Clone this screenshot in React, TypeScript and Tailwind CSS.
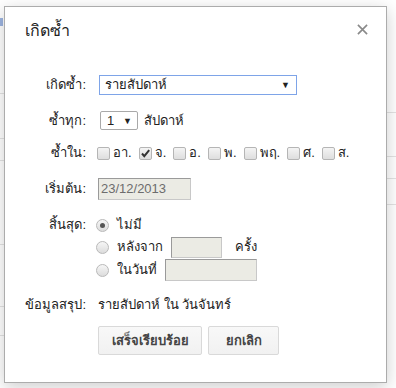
import React from 'react';

const days = [
  { label: 'อา.', checked: false },
  { label: 'จ.', checked: true },
  { label: 'อ.', checked: false },
  { label: 'พ.', checked: false },
  { label: 'พฤ.', checked: false },
  { label: 'ศ.', checked: false },
  { label: 'ส.', checked: false },
];

const Checkbox = ({ checked }: { checked: boolean }) => (
  <span className="relative inline-block w-[13px] h-[13px] rounded-[2px] border border-[#b5b5b5] bg-gradient-to-b from-[#f4f4f4] to-[#dedede]">
    {checked && (
      <svg viewBox="0 0 13 13" className="absolute -left-px -top-px w-[13px] h-[13px]">
        <path d="M3 6.5 L5.3 9.2 L10.2 3.2" fill="none" stroke="#333" strokeWidth="2" />
      </svg>
    )}
  </span>
);

const Radio = ({ checked }: { checked: boolean }) => (
  <span className="flex shrink-0 items-center justify-center w-[13px] h-[13px] rounded-full border border-[#b9b9b9] bg-gradient-to-b from-[#f6f6f6] to-[#dcdcdc]">
    {checked && <span className="w-[5px] h-[5px] rounded-full bg-[#555]" />}
  </span>
);

const Label = ({ children }: { children: React.ReactNode }) => (
  <div className="w-[83px] shrink-0 pr-[2px] text-right">{children}</div>
);

const App = () => {
  return (
    <div
      className="relative w-[396px] h-[388px] overflow-hidden bg-white text-[13px] leading-[18px] text-[#222]"
      style={{ fontFamily: '"Liberation Sans", "Noto Sans", "DejaVu Sans", sans-serif' }}
    >
      {/* calendar grid peeking out behind the dialog */}
      <div className="absolute left-0 top-[18px] w-[3px] h-[8px] bg-[#9db4e0]" />
      {[93, 138, 160, 244, 306, 335].map((y) => (
        <div key={'l' + y} className="absolute left-0 w-[4px] h-px bg-[#e3e3e3]" style={{ top: y }} />
      ))}
      {[112, 156, 178, 204].map((y) => (
        <div key={'r' + y} className="absolute right-0 w-[10px] h-px bg-[#e3e3e3]" style={{ top: y }} />
      ))}

      {/* dialog */}
      <div className="absolute left-[4px] top-[6px] w-[383px] h-[377px] border border-[#acacac] bg-white shadow-[0_4px_16px_rgba(0,0,0,0.2)]">
        <div className="flex items-start justify-between pl-[20px] pr-[18px] pt-[14px] h-[50px]">
          <span className="text-[16px] leading-[20px] text-[#222]">เกิดซ้ำ</span>
          <svg viewBox="0 0 12 12" className="mt-[3px] w-[11px] h-[11px]">
            <path d="M1 1 L11 11 M11 1 L1 11" stroke="#8a8a8a" strokeWidth="1.8" />
          </svg>
        </div>

        <div className="flex flex-col">
          {/* repeats */}
          <div className="mt-[18px] flex items-center gap-[10px] h-[20px]">
            <Label>เกิดซ้ำ:</Label>
            <div className="flex items-center justify-between ml-px w-[198px] h-[20px] border border-[#7ea4e8] pl-[5px] pr-[6px]">
              <span>รายสัปดาห์</span>
              <span className="text-[9px]">▼</span>
            </div>
          </div>

          {/* repeat every */}
          <div className="mt-[16px] flex items-center gap-[10px] h-[19px]">
            <Label>ซ้ำทุก:</Label>
            <div className="flex items-center justify-between ml-[2px] w-[38px] h-[19px] border border-[#a9a9a9] rounded-[2px] pl-[6px] pr-[5px]">
              <span>1</span>
              <span className="text-[9px]">▼</span>
            </div>
            <span className="-ml-[4px]">สัปดาห์</span>
          </div>

          {/* repeat on */}
          <div className="mt-[13px] flex items-center gap-[10px] h-[20px]">
            <Label>ซ้ำใน:</Label>
            <div className="-ml-px flex items-center gap-[7px]">
              {days.map((d) => (
                <span key={d.label} className="flex items-center gap-[3px]">
                  <Checkbox checked={d.checked} />
                  <span>{d.label}</span>
                </span>
              ))}
            </div>
          </div>

          {/* starts on */}
          <div className="mt-[15px] flex items-center gap-[10px] h-[22px]">
            <Label>เริ่มต้น:</Label>
            <div className="w-[93px] h-[22px] bg-[#ebebe4] border border-[#c8c8c8] border-t-[#9a9a9a] border-l-[#9a9a9a] pl-[2px] leading-[20px] text-[#6d6d6d]">
              23/12/2013
            </div>
          </div>

          {/* ends */}
          <div className="mt-[14px] flex items-start gap-[10px]">
            <div className="h-[22px] flex items-center">
              <Label>สิ้นสุด:</Label>
            </div>
            <div className="-ml-[2px] flex flex-col">
              <div className="flex items-center h-[22px]">
                <Radio checked />
                <span className="ml-[8px]">ไม่มี</span>
              </div>
              <div className="flex items-center h-[22px]">
                <Radio checked={false} />
                <span className="ml-[8px] w-[54px] shrink-0 whitespace-nowrap">หลังจาก</span>
                <div className="w-[51px] h-[21px] bg-[#ebebe4] border border-[#c8c8c8] border-t-[#9a9a9a] border-l-[#9a9a9a]" />
                <span className="ml-[13px]">ครั้ง</span>
              </div>
              <div className="mt-px flex items-center h-[22px]">
                <Radio checked={false} />
                <span className="ml-[8px] w-[48px] shrink-0 whitespace-nowrap">ในวันที่</span>
                <div className="w-[92px] h-[22px] bg-[#ebebe4] border border-[#c8c8c8] border-t-[#9a9a9a] border-l-[#9a9a9a]" />
              </div>
            </div>
          </div>

          {/* summary */}
          <div className="mt-[15px] flex items-center gap-[10px] h-[18px]">
            <Label>ข้อมูลสรุป:</Label>
            <span>รายสัปดาห์ ใน วันจันทร์</span>
          </div>

          {/* buttons */}
          <div className="mt-[12px] flex gap-[6px] pl-[93px]">
            <button className="w-[104px] h-[29px] rounded-[2px] border border-[#d9d9d9] bg-gradient-to-b from-[#f8f8f8] to-[#f1f1f1] font-bold text-[#444]">
              เสร็จเรียบร้อย
            </button>
            <button className="w-[71px] h-[29px] rounded-[2px] border border-[#d9d9d9] bg-gradient-to-b from-[#f8f8f8] to-[#f1f1f1] font-bold text-[#444]">
              ยกเลิก
            </button>
          </div>
        </div>
      </div>
    </div>
  );
};

export default App;
